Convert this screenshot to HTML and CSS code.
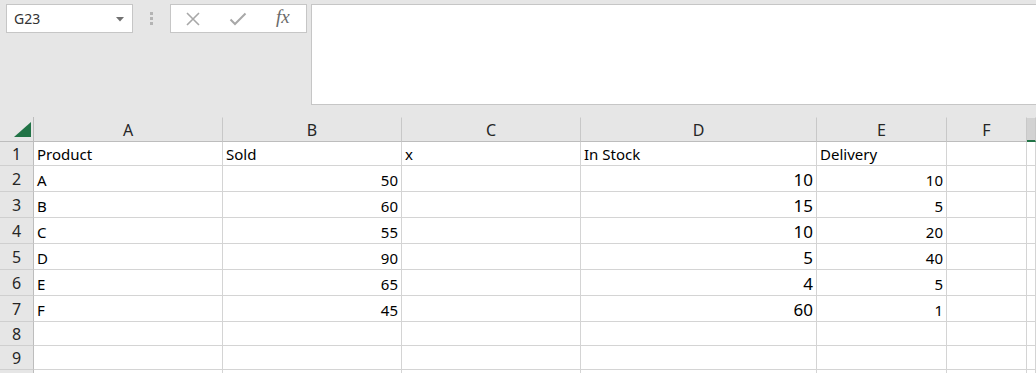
FILE: index.html
```html
<!DOCTYPE html>
<html lang="en">

<head>
    <meta charset="UTF-8">
    <meta name="viewport" content="width=device-width, initial-scale=1.0">
    <title>Book1 - Sheet1</title>
    <link rel="stylesheet" href="styles.css">
</head>

<body>

    <!-- Formula bar -->
    <div class="formula-area">
        <div class="namebox">
            <span>G23</span>
            <svg class="drop" width="8" height="5" viewBox="0 0 8 5"><path d="M0 0 H8 L4 4.5 Z" fill="#707070"/></svg>
        </div>
        <div class="grip"><i></i><i></i><i></i></div>
        <div class="fx-buttons">
            <svg width="16" height="16" viewBox="0 0 16 16"><path d="M2 2 L14 14 M14 2 L2 14" stroke="#a8a8a8" stroke-width="1.6" fill="none"/></svg>
            <svg width="18" height="14" viewBox="0 0 18 14"><path d="M1.5 7.5 L6 12 L16.5 1.5" stroke="#a8a8a8" stroke-width="2" fill="none"/></svg>
            <span class="fx">fx</span>
        </div>
        <div class="formula-input"></div>
    </div>

    <!-- Sheet grid -->
    <div class="sheet">
        <div class="corner"><svg width="17" height="15" viewBox="0 0 17 15"><path d="M17 0 V15 H0 Z" fill="#217346"/></svg></div>
        <div class="colhead">A</div>
        <div class="colhead">B</div>
        <div class="colhead">C</div>
        <div class="colhead">D</div>
        <div class="colhead">E</div>
        <div class="colhead">F</div>
        <div class="colhead selected"></div>

        <div class="rowhead">1</div>
        <div class="cell">Product</div>
        <div class="cell">Sold</div>
        <div class="cell">x</div>
        <div class="cell">In Stock</div>
        <div class="cell">Delivery</div>
        <div class="cell"></div>
        <div class="cell"></div>

        <div class="rowhead">2</div>
        <div class="cell">A</div>
        <div class="cell num">50</div>
        <div class="cell"></div>
        <div class="cell num big">10</div>
        <div class="cell num">10</div>
        <div class="cell"></div>
        <div class="cell"></div>

        <div class="rowhead">3</div>
        <div class="cell">B</div>
        <div class="cell num">60</div>
        <div class="cell"></div>
        <div class="cell num big">15</div>
        <div class="cell num">5</div>
        <div class="cell"></div>
        <div class="cell"></div>

        <div class="rowhead">4</div>
        <div class="cell">C</div>
        <div class="cell num">55</div>
        <div class="cell"></div>
        <div class="cell num big">10</div>
        <div class="cell num">20</div>
        <div class="cell"></div>
        <div class="cell"></div>

        <div class="rowhead">5</div>
        <div class="cell">D</div>
        <div class="cell num">90</div>
        <div class="cell"></div>
        <div class="cell num big">5</div>
        <div class="cell num">40</div>
        <div class="cell"></div>
        <div class="cell"></div>

        <div class="rowhead">6</div>
        <div class="cell">E</div>
        <div class="cell num">65</div>
        <div class="cell"></div>
        <div class="cell num big">4</div>
        <div class="cell num">5</div>
        <div class="cell"></div>
        <div class="cell"></div>

        <div class="rowhead">7</div>
        <div class="cell">F</div>
        <div class="cell num">45</div>
        <div class="cell"></div>
        <div class="cell num big">60</div>
        <div class="cell num">1</div>
        <div class="cell"></div>
        <div class="cell"></div>

        <div class="rowhead">8</div>
        <div class="cell"></div>
        <div class="cell"></div>
        <div class="cell"></div>
        <div class="cell"></div>
        <div class="cell"></div>
        <div class="cell"></div>
        <div class="cell"></div>

        <div class="rowhead">9</div>
        <div class="cell"></div>
        <div class="cell"></div>
        <div class="cell"></div>
        <div class="cell"></div>
        <div class="cell"></div>
        <div class="cell"></div>
        <div class="cell"></div>

        <!-- row 10 falls below the window edge -->
        <div class="rowhead"></div>
        <div class="cell"></div>
        <div class="cell"></div>
        <div class="cell"></div>
        <div class="cell"></div>
        <div class="cell"></div>
        <div class="cell"></div>
        <div class="cell"></div>
    </div>

</body>

</html>
```

FILE: styles.css
```css
/* Reset */
* {
    margin: 0;
    padding: 0;
    box-sizing: border-box;
}

body {
    font-family: 'Noto Sans', 'Segoe UI', sans-serif;
    background-color: #e6e6e6;
    color: #222;
    width: 1036px;
    height: 373px;
    overflow: hidden;
}

/* Formula bar area */
.formula-area {
    height: 117px;
    display: flex;
    align-items: flex-start;
    padding: 4px 0 0 6px;
}

.namebox {
    width: 127px;
    height: 29px;
    background-color: #fff;
    border: 1px solid #c6c6c6;
    display: flex;
    align-items: center;
    justify-content: space-between;
    padding: 0 8px 0 7px;
    font-size: 14px;
    color: #333;
}

.namebox .drop {
    margin-top: 1px;
}

.grip {
    width: 37px;
    height: 29px;
    display: flex;
    flex-direction: column;
    align-items: center;
    justify-content: center;
    gap: 2px;
}

.grip i {
    display: block;
    width: 3px;
    height: 3px;
    background-color: #b4b4b4;
}

.fx-buttons {
    width: 137px;
    height: 29px;
    background-color: #fff;
    border: 1px solid #c6c6c6;
    display: flex;
    align-items: center;
    padding: 0 14px 0 14px;
}

.fx-buttons svg:first-child {
    margin-right: 28px;
}

.fx-buttons svg:nth-child(2) {
    margin-right: 29px;
}

.fx {
    font-family: 'Liberation Serif', serif;
    font-style: italic;
    font-size: 19px;
    color: #6a6a6a;
    margin-top: -3px;
}

.formula-input {
    flex: 1;
    height: 101px;
    margin-left: 4px;
    background-color: #fff;
    border: 1px solid #c6c6c6;
    border-right: none;
}

/* Sheet grid */
.sheet {
    display: grid;
    grid-template-columns: 34px 189px 179px 179px 236px 130px 80px 1fr;
    grid-template-rows: 25px 24px repeat(6, 26px) 24px 24px 24px;
    background-color: #fff;
    font-size: 15px;
}

.corner,
.colhead,
.rowhead {
    background-color: #e6e6e6;
}

.corner {
    display: flex;
    align-items: flex-end;
    justify-content: flex-end;
    padding: 0 2px 4px 0;
    border-right: 1px solid #bdbdbd;
    border-bottom: 1px solid #bdbdbd;
}

.colhead {
    display: flex;
    align-items: center;
    justify-content: center;
    border-bottom: 1px solid #bdbdbd;
    border-right: 1px solid #c8c8c8;
    border-top: 1px solid #e6e6e6;
    font-size: 16px;
    color: #262626;
    padding-top: 1px;
}

.colhead.selected {
    background-color: #d2d2d2;
    border-bottom: 2px solid #217346;
}

.rowhead {
    display: flex;
    align-items: center;
    justify-content: center;
    border-right: 1px solid #bdbdbd;
    border-bottom: 1px solid #cfcfcf;
    font-size: 16px;
    color: #262626;
}

.cell {
    display: flex;
    align-items: flex-end;
    padding: 0 3px 1px 3px;
    border-right: 1px solid #d4d4d4;
    border-bottom: 1px solid #d4d4d4;
    line-height: 20px;
    white-space: nowrap;
    color: #000;
}

.cell.num {
    justify-content: flex-end;
}

.cell.big {
    font-size: 17px;
}
```
